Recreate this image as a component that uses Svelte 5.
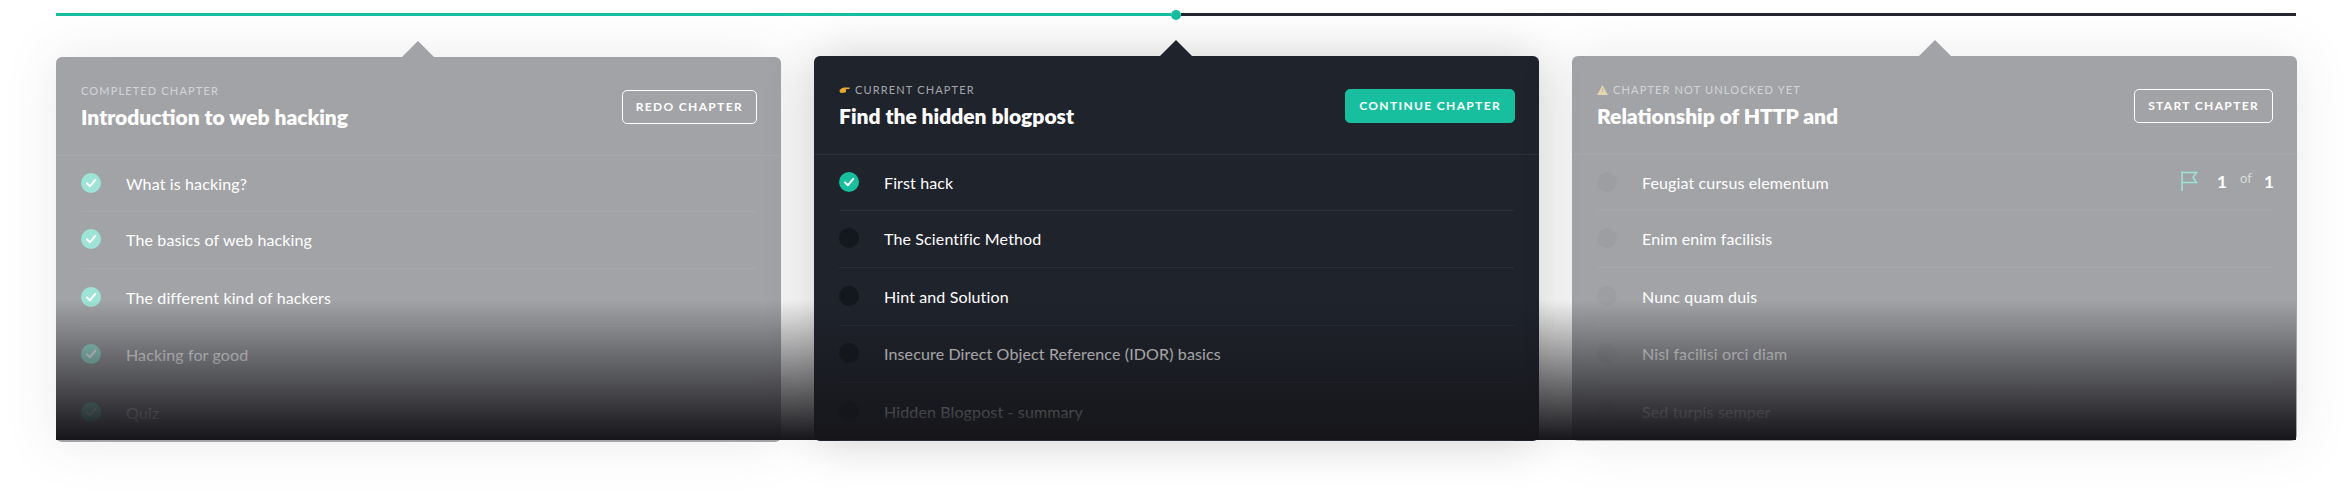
<script lang="ts">
	const chapters = [
		{
			state: 'done',
			label: 'COMPLETED CHAPTER',
			title: 'Introduction to web hacking',
			action: 'REDO CHAPTER',
			lessons: [
				{ name: 'What is hacking?', done: true },
				{ name: 'The basics of web hacking', done: true },
				{ name: 'The different kind of hackers', done: true },
				{ name: 'Hacking for good', done: true },
				{ name: 'Quiz', done: true }
			]
		},
		{
			state: 'current',
			label: 'CURRENT CHAPTER',
			title: 'Find the hidden blogpost',
			action: 'CONTINUE CHAPTER',
			lessons: [
				{ name: 'First hack', done: true },
				{ name: 'The Scientific Method', done: false },
				{ name: 'Hint and Solution', done: false },
				{ name: 'Insecure Direct Object Reference (IDOR) basics', done: false },
				{ name: 'Hidden Blogpost - summary', done: false }
			]
		},
		{
			state: 'locked',
			label: 'CHAPTER NOT UNLOCKED YET',
			title: 'Relationship of HTTP and',
			action: 'START CHAPTER',
			flags: true,
			lessons: [
				{ name: 'Feugiat cursus elementum', done: false },
				{ name: 'Enim enim facilisis', done: false },
				{ name: 'Nunc quam duis', done: false },
				{ name: 'Nisl facilisi orci diam', done: false },
				{ name: 'Sed turpis semper', done: false }
			]
		}
	];
</script>

<div class="page">
	<div class="track">
		<div class="track-done"></div>
		<div class="track-dot"></div>
		<div class="track-todo"></div>
	</div>

	<div class="cards">
		{#each chapters as c}
			<section class="card {c.state}">
				<header class="head">
					<div>
						<div class="label">
							{#if c.state === 'current'}
								<svg class="hand" viewBox="0 0 12 8" width="11" height="8">
									<path d="M0.5 4.2 L3 2 L5.6 1.4 L11.6 1.2 L11.6 2.8 L7.6 3.2 L7.6 6.4 L3.4 7.4 L1 6.6 Z" fill="#e8aa2e" />
								</svg>
							{:else if c.state === 'locked'}
								<svg class="warn" viewBox="0 0 12 11" width="11" height="10">
									<path d="M6 0 L12 11 L0 11 Z" fill="#b59a3c" />
									<rect x="5.4" y="3.6" width="1.2" height="4" fill="#1f232c" opacity="0.5" />
								</svg>
							{/if}
							<span>{c.label}</span>
						</div>
						<h2>{c.title}</h2>
					</div>
					<button class="action">{c.action}</button>
				</header>

				<ul>
					{#each c.lessons as l, i}
						<li>
							<span class="status" class:checked={l.done}>
								{#if l.done}
									<svg viewBox="0 0 20 20" width="20" height="20">
										<path d="M6 10.4 L8.9 13.3 L14.2 6.8" fill="none" stroke="#fff" stroke-width="2" stroke-linecap="round" stroke-linejoin="round" />
									</svg>
								{/if}
							</span>
							<span class="name">{l.name}</span>
							{#if c.flags && i === 0}
								<span class="flags">
									<svg viewBox="0 0 17 20" width="17" height="20">
										<path d="M1 0.5 V20 M1 1.5 H15.5 L12 6.5 L15.5 11.5 H1" fill="none" stroke="#17bf9e" stroke-width="1.5" />
									</svg>
									<b class="first">1</b>
									<small>of</small>
									<b>1</b>
								</span>
							{/if}
						</li>
					{/each}
				</ul>
			</section>
		{/each}
		<div class="fade"></div>
	</div>
</div>

<style>
	:global(body) {
		background: #fff;
	}

	.page {
		height: 498px;
		padding: 13px 56px 0;
		box-sizing: border-box;
		overflow: hidden;
		font-family: Lato, 'Open Sans', sans-serif;
	}

	/* ── progress line ── */
	.track {
		display: flex;
		align-items: center;
		height: 3px;
	}

	.track-done {
		flex: 0 0 1115px;
		height: 3px;
		background: #17bf9e;
	}

	.track-dot {
		flex: none;
		width: 10px;
		height: 10px;
		border-radius: 50%;
		background: #17bf9e;
	}

	.track-todo {
		flex: 1;
		height: 3px;
		background: #24272f;
	}

	/* ── cards ── */
	.cards {
		position: relative;
		display: flex;
		gap: 33px;
		margin-top: 40px;
		height: 385px;
	}

	.card {
		position: relative;
		flex: 0 0 725px;
		height: 385px;
		background: #1f232c;
		border-radius: 6px;
		box-shadow: 0 0 50px rgba(0, 0, 0, 0.2);
		color: #fff;
	}

	.card::before {
		content: '';
		position: absolute;
		top: -16px;
		left: var(--arrow);
		width: 0;
		height: 0;
		border-left: 16px solid transparent;
		border-right: 16px solid transparent;
		border-bottom: 16px solid #1f232c;
	}

	.card.done {
		--arrow: 346px;
		opacity: 0.41;
		margin-top: 1px;
	}

	.card.current {
		--arrow: 346px;
	}

	.card.locked {
		--arrow: 347px;
		opacity: 0.41;
	}

	.head {
		display: flex;
		justify-content: space-between;
		align-items: flex-start;
		box-sizing: border-box;
		height: 99px;
		padding: 27px 24px 0 25px;
		border-bottom: 1px solid rgba(255, 255, 255, 0.06);
	}

	.label {
		display: flex;
		align-items: center;
		gap: 5px;
		height: 14px;
		font-size: 11px;
		line-height: 14px;
		letter-spacing: 1.15px;
		color: #a4a6aa;
	}

	.hand,
	.warn {
		flex: none;
	}

	.card.done .label,
	.card.locked .label {
		color: rgba(255, 255, 255, 0.55);
	}

	h2 {
		margin: 7px 0 0;
		font-size: 21px;
		line-height: 24px;
		font-weight: 800;
	}

	.action {
		margin-top: 6px;
		height: 34px;
		box-sizing: border-box;
		padding: 0 13px 2px;
		background: transparent;
		border: 1.5px solid #fff;
		border-radius: 5px;
		color: #fff;
		font-family: inherit;
		font-size: 12px;
		font-weight: 700;
		letter-spacing: 1.35px;
	}

	.card.current .action {
		background: #17bf9e;
		border-color: #17bf9e;
	}

	ul {
		list-style: none;
		margin: 0 25px 0 25px;
		padding: 0;
	}

	li {
		display: flex;
		align-items: center;
		gap: 25px;
		box-sizing: border-box;
		height: 57.5px;
		border-bottom: 1px solid rgba(255, 255, 255, 0.05);
		font-size: 16px;
		letter-spacing: 0.13px;
	}

	li:first-child {
		height: 55.5px;
	}

	.status {
		flex: none;
		display: block;
		width: 20px;
		height: 20px;
		border-radius: 50%;
		background: #14171e;
		margin-top: -1px;
	}

	.status.checked {
		background: #17bf9e;
	}

	.status svg {
		display: block;
	}

	.flags {
		display: flex;
		align-items: center;
		margin-left: auto;
		margin-top: -2px;
		margin-right: -2px;
		font-size: 17px;
	}

	.flags b {
		font-weight: 700;
	}

	.flags .first {
		margin-left: 19px;
	}

	.flags small {
		margin: -6px 12px 0 13px;
		font-size: 13px;
		color: rgba(255, 255, 255, 0.6);
	}

	/* darkening over the lower part of the whole row */
	.fade {
		position: absolute;
		left: 0;
		right: 0;
		top: 244px;
		height: 140px;
		background: linear-gradient(to bottom, rgba(22, 22, 26, 0), rgb(22, 22, 26));
		pointer-events: none;
	}
</style>
